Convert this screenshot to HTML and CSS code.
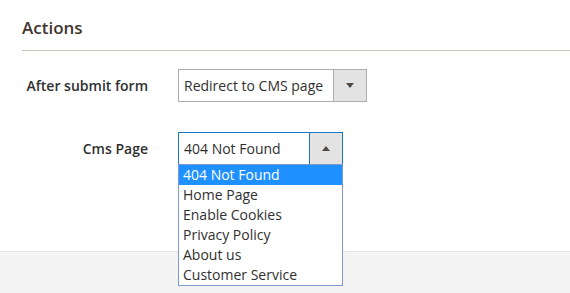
FILE: index.html
```html
<!DOCTYPE html>
<html lang="en">
<head>
  <meta charset="UTF-8" />
  <title>Actions</title>
  <link rel="stylesheet" href="styles.css">
</head>
<body>

  <!-- section: actions -->
  <div class="fieldset">
    <h2 class="fieldset-title">Actions</h2>

    <div class="field">
      <label class="field-label">After submit form</label>
      <div class="select select-wide">
        <span class="select-value">Redirect to CMS page</span>
        <span class="select-btn"><i class="arrow-down"></i></span>
      </div>
    </div>

    <div class="field">
      <label class="field-label">Cms Page</label>
      <div class="select select-open">
        <span class="select-value">404 Not Found</span>
        <span class="select-btn"><i class="arrow-up"></i></span>

        <!-- open option list -->
        <ul class="options">
          <li class="selected">404 Not Found</li>
          <li>Home Page</li>
          <li>Enable Cookies</li>
          <li>Privacy Policy</li>
          <li>About us</li>
          <li>Customer Service</li>
        </ul>
      </div>
    </div>
  </div>

  <!-- footer band -->
  <div class="page-footer"></div>

</body>
</html>
```

FILE: styles.css
```css
/* ===== base ===== */
*{box-sizing:border-box}
body{
  margin:0;
  background:#fff;
  font-family:"Open Sans","Liberation Sans",sans-serif;
  color:#303030;
}

/* ===== fieldset ===== */
.fieldset{
  padding:16px 0 0 22px;
  height:251px;
}
.fieldset-title{
  margin:0;
  padding:0 0 10px;
  font-size:17px;
  font-weight:600;
  color:#41362f;
  line-height:24px;
  border-bottom:1px solid #cbc3b4;
}

/* ===== rows ===== */
.field{
  display:grid;
  grid-template-columns:126px 189px;
  column-gap:30px;
  align-items:center;
  margin-top:18px;
}
.field + .field{margin-top:30px}
.field-label{
  text-align:right;
  font-size:14px;
  font-weight:600;
  color:#303030;
}

/* ===== fake select ===== */
.select{
  position:relative;
  display:flex;
  height:33px;
  border:1px solid #adadad;
  background:#fff;
}
.select-open{
  width:165px;
  border-color:#1979c3;
}
.select-value{
  flex:1;
  padding:0 5px;
  font-size:14px;
  line-height:31px;
  color:#303030;
  white-space:nowrap;
}
.select-btn{
  width:33px;
  display:flex;
  align-items:center;
  justify-content:center;
  background:#e3e3e3;
  border-left:1px solid #adadad;
}
.select-open .select-btn{border-left-color:#1979c3}
.arrow-down,
.arrow-up{
  width:0;
  height:0;
  border-left:4px solid transparent;
  border-right:4px solid transparent;
}
.arrow-down{border-top:5px solid #514943}
.arrow-up{border-bottom:5px solid #514943}

/* ===== open list ===== */
.options{
  position:absolute;
  top:31px;
  left:-1px;
  right:-1px;
  margin:0;
  padding:0;
  list-style:none;
  background:#fff;
  border:1px solid #7b98d2;
  z-index:2;
}
.options li{
  height:20px;
  padding:0 4px;
  font-size:14px;
  line-height:20px;
  color:#303030;
  white-space:nowrap;
}
.options li.selected{
  background:#1e90ff;
  color:#fff;
}

/* ===== footer ===== */
.page-footer{
  height:42px;
  background:#f4f4f4;
  border-top:1px solid #e3e3e3;
}
```
